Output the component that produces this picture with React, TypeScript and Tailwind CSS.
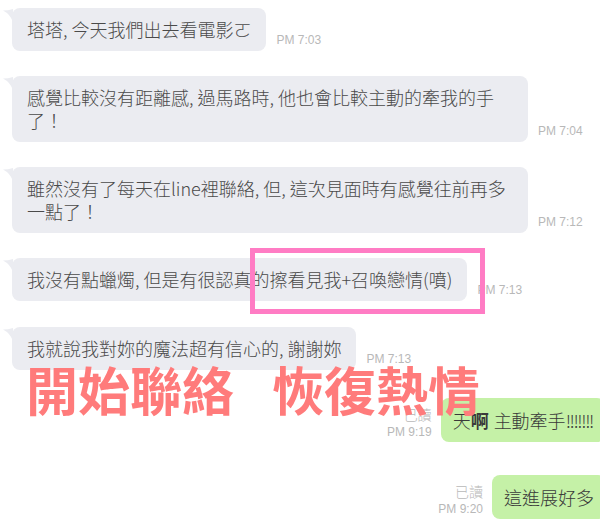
import { Fragment } from 'react'

const cjk = '"Noto Sans CJK TC", "Noto Sans", sans-serif'
const latin = '"Liberation Sans", Arial, sans-serif'

const incoming = [
  { id: 1, lines: ['塔塔, 今天我們出去看電影ㄛ'], time: 'PM 7:03', gap: 'mt-0' },
  { id: 2, lines: ['感覺比較沒有距離感, 過馬路時, 他也會比較主動的牽我的手', '了！'], time: 'PM 7:04', gap: 'mt-[25px]' },
  { id: 3, lines: ['雖然沒有了每天在line裡聯絡, 但, 這次見面時有感覺往前再多', '一點了！'], time: 'PM 7:12', gap: 'mt-[25px]' },
  { id: 4, lines: ['我沒有點蠟燭, 但是有很認真的擦看見我+召喚戀情(噴)'], time: 'PM 7:13', gap: 'mt-[25px]' },
  { id: 5, lines: ['我就說我對妳的魔法超有信心的, 謝謝妳'], time: 'PM 7:13', gap: 'mt-[26px]' },
]

const Tail = () => (
  <svg className="absolute -left-[9px] top-[1px]" width="10" height="14" viewBox="0 0 10 14">
    <path d="M0 1.5 Q5 1.5 10 0 L10 13 Q7 5 0 1.5Z" fill="#ebecf1" />
  </svg>
)

const Time = ({ children }: { children: string }) => (
  <span className="mb-[4px] text-[12px] leading-[14px] text-[#b8b8b8] whitespace-nowrap" style={{ fontFamily: latin }}>
    {children}
  </span>
)

const Read = ({ time }: { time: string }) => (
  <div className="mb-[2px] flex flex-col items-end text-[#b8b8b8]">
    <span className="text-[14px] leading-[20px] font-light">已讀</span>
    <span className="text-[12px] leading-[16px]" style={{ fontFamily: latin }}>
      {time}
    </span>
  </div>
)

const App = () => {
  return (
    <div className="relative w-[600px] h-[530px] overflow-hidden bg-white" style={{ fontFamily: cjk }}>
      <div className="flex flex-col pt-[8px]">
        {incoming.map((m) => (
          <div key={m.id} className={`flex items-end gap-[10px] pl-[12px] ${m.gap}`}>
            <div
              className={`relative rounded-lg bg-[#ebecf1] px-[15px] py-[10px] text-[18px] leading-[23px] font-light text-[#4a4a4a] whitespace-nowrap ${
                m.lines.length > 1 ? 'w-[516px]' : ''
              }`}
            >
              <Tail />
              {m.lines.map((l, i) => (
                <Fragment key={i}>
                  {i > 0 && <br />}
                  {l}
                </Fragment>
              ))}
            </div>
            <Time>{m.time}</Time>
          </div>
        ))}

        {/* outgoing */}
        <div className="mt-[28px] flex items-end justify-end gap-[9px]">
          <Read time="PM 9:19" />
          <div className="-mr-[5px] rounded-lg bg-[#c5f1a7] px-[12px] py-[10px] text-[18px] leading-[24px] font-light text-[#3a3a3a] whitespace-nowrap">
            天<span className="font-bold">啊</span>
            <span className="ml-[5px]">主動牽手</span>
            <span className="tracking-[-1.4px]">!!!!!!!</span>
          </div>
        </div>
        <div className="mt-[33px] flex items-end justify-end gap-[9px]">
          <Read time="PM 9:20" />
          <div className="-mr-[6px] rounded-lg bg-[#c5f1a7] px-[12px] py-[10px] text-[18px] leading-[24px] font-light text-[#3a3a3a] whitespace-nowrap">
            這進展好多
          </div>
        </div>
      </div>

      {/* highlight box */}
      <div className="absolute left-[250px] top-[248px] w-[235px] h-[66px] border-[5px] border-[#ff7cc4]" />

      {/* caption */}
      <div className="absolute left-[26px] top-[359px] flex gap-[38px] text-[52px] leading-[60px] font-bold text-[#ff7b7b] whitespace-nowrap">
        <span>開始聯絡</span>
        <span>恢復熱情</span>
      </div>
    </div>
  )
}

export default App
